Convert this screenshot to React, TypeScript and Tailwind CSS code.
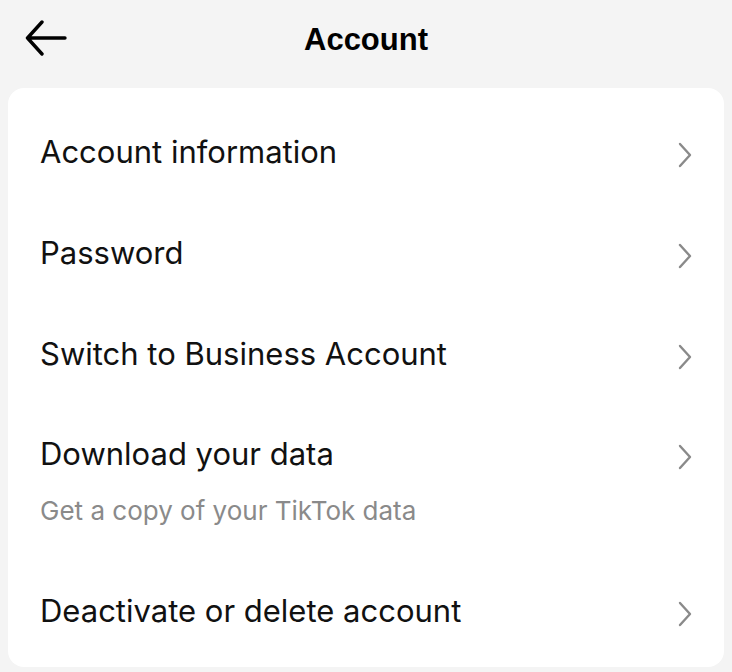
const rows = [
  { title: 'Account information' },
  { title: 'Password' },
  { title: 'Switch to Business Account' },
  { title: 'Download your data', subtitle: 'Get a copy of your TikTok data' },
  { title: 'Deactivate or delete account' },
]

function Chevron() {
  return (
    <svg width="16" height="26" viewBox="0 0 16 26" fill="none" className="shrink-0 mt-[6px]">
      <path d="M3 2 L13 13 L3 24" stroke="#8a8a8a" strokeWidth="2.4" strokeLinecap="round" strokeLinejoin="round" />
    </svg>
  )
}

function BackArrow() {
  return (
    <svg width="42" height="36" viewBox="0 0 42 36" fill="none">
      <path d="M2.5 18 H40 M2.5 18 L17 2 M2.5 18 L17 34" stroke="#000" strokeWidth="3.4" strokeLinecap="round" strokeLinejoin="round" />
    </svg>
  )
}

export default function App() {
  return (
    <div className="w-[732px] h-[672px] overflow-hidden bg-[#f4f4f4] px-2" style={{ fontFamily: 'Inter, "Liberation Sans", sans-serif' }}>
      <div className="relative h-[78px] flex items-center justify-center">
        <button className="absolute left-[17px] top-[20px]">
          <BackArrow />
        </button>
        <h1
          className="text-[31px] font-bold text-black leading-none"
          style={{ fontFamily: '"Liberation Sans", Arial, sans-serif' }}
        >
          Account
        </h1>
      </div>
      <div className="mt-[10px] bg-white rounded-2xl pt-[13px] pb-[6px] pl-[32px] pr-[31px]">
        {rows.map((row) =>
          row.subtitle ? (
            <div key={row.title} className="pt-[32px] pb-[34px]">
              <div className="flex items-center justify-between h-[36px]">
                <span className="text-[31px] leading-[36px] text-[#111]">{row.title}</span>
                <Chevron />
              </div>
              <p className="mt-[24px] text-[26px] leading-[30px] text-[#8a8a8a]">{row.subtitle}</p>
            </div>
          ) : (
            <div key={row.title} className="flex items-center justify-between h-[101px]">
              <span className="text-[31px] leading-[36px] text-[#111]">{row.title}</span>
              <Chevron />
            </div>
          )
        )}
      </div>
    </div>
  )
}
